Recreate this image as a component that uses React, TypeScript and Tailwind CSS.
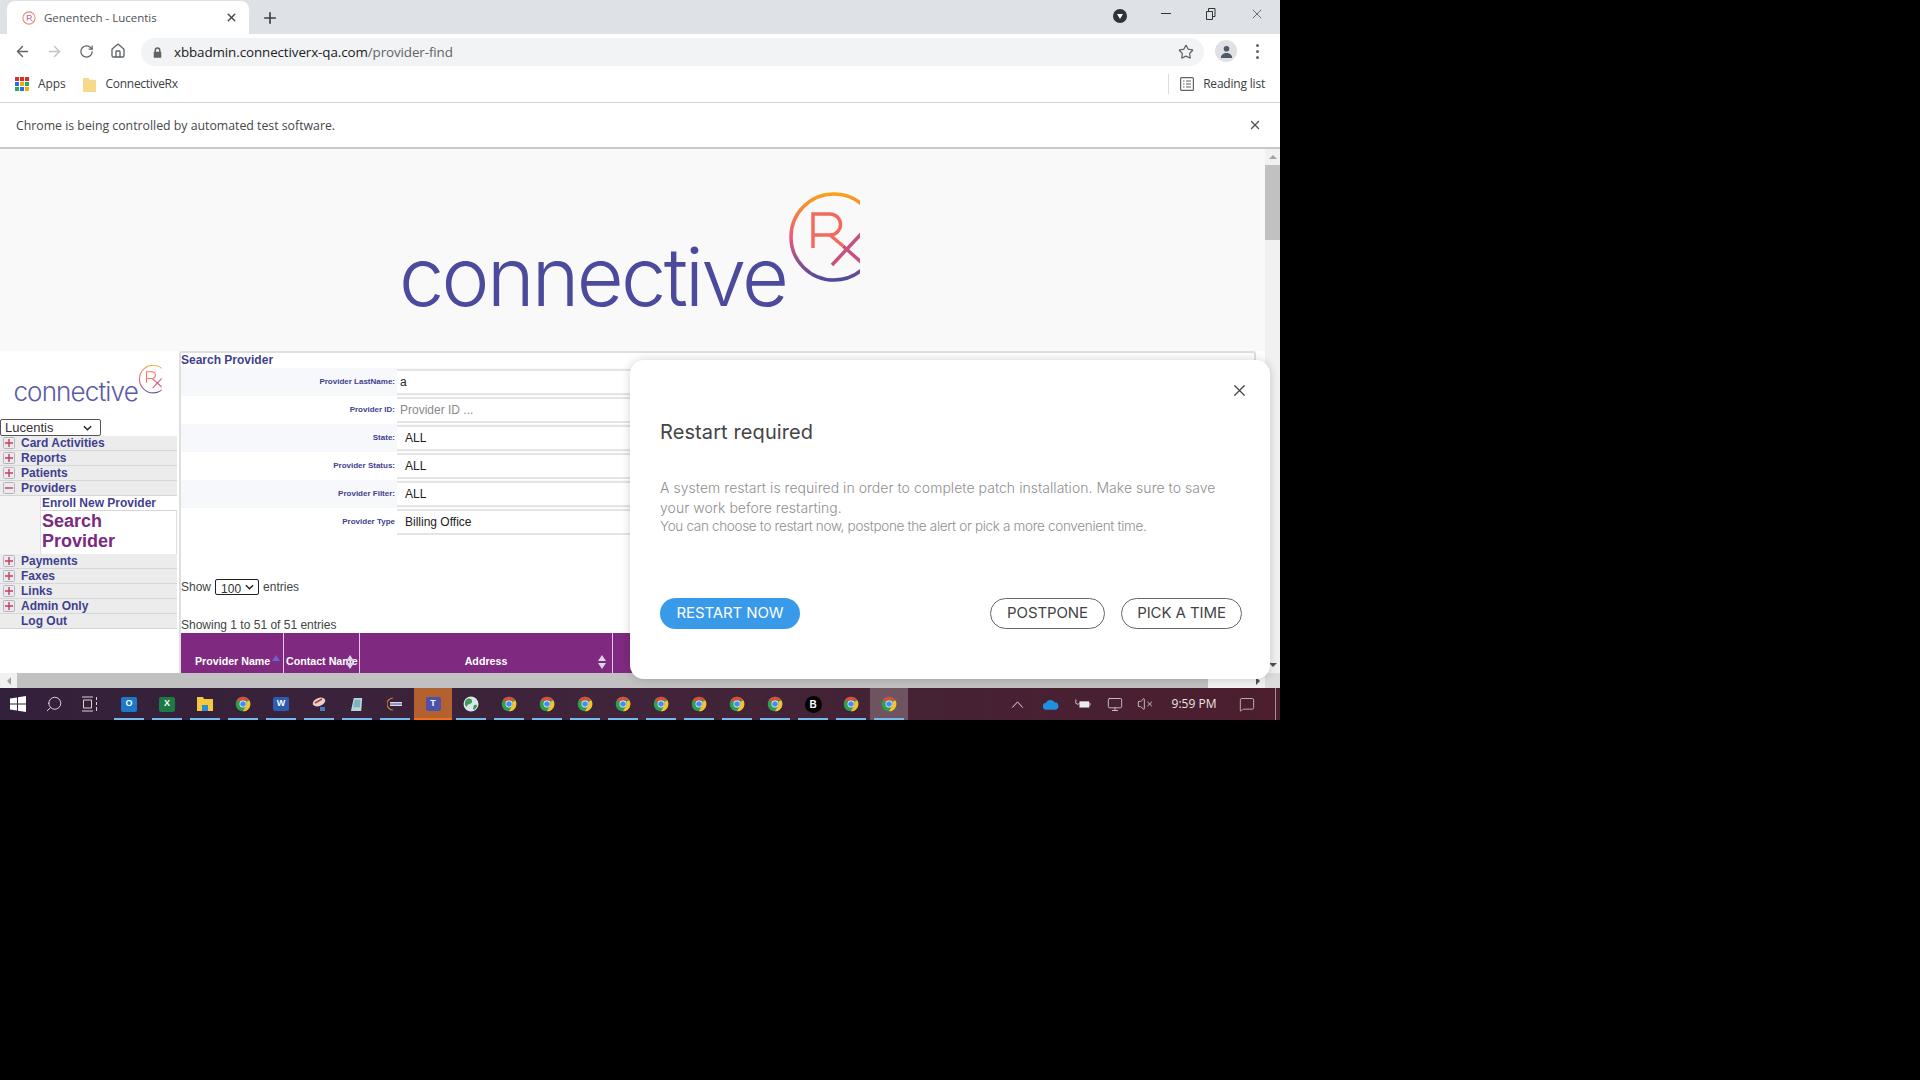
import React from "react";
import { ArrowLeft, ArrowRight, RotateCw, Home, Star, X, Plus, Search, VolumeX, Monitor, MessageSquare } from "lucide-react";

function Logo({ className, id }: { className: string; id: string }) {
  return (
    <svg viewBox="0 0 462 140" className={className}>
      <defs>
        <linearGradient id={id} x1="0" y1="0" x2="0" y2="1">
          <stop offset="0" stopColor="#f7a21b" />
          <stop offset="0.5" stopColor="#f0567a" />
          <stop offset="1" stopColor="#4e4a9e" />
        </linearGradient>
        <clipPath id={id + "c"}><rect x="0" y="0" width="460" height="120" /></clipPath>
      </defs>
      <text x="-1" y="116" fontSize="81" fontFamily="Inter, sans-serif" fontWeight="300" fill="#4b4a9c" textLength="390" lengthAdjust="spacing">connective</text>
      <g clipPath={`url(#${id}c)`} fill="none" strokeWidth="3.5">
        <circle cx="434" cy="47" r="43" stroke={`url(#${id})`} />
        <path d="M413 58V24h17a10 10 0 0 1 0 21h-17M430 45l13 11" stroke="#f26a5e" />
        <path d="M432 75l30-32M443 56l19 17" stroke="#c9507f" />
      </g>
    </svg>
  );
}

function Chromeicon() {
  return (
    <svg viewBox="0 0 24 24" className="w-[16px] h-[16px]">
      <circle cx="12" cy="12" r="11" fill="#2f9e50" />
      <path d="M12 1a11 11 0 0 1 9.53 5.5H12A5.5 5.5 0 0 0 7 9.8L3.3 5.2A11 11 0 0 1 12 1z" fill="#dd4b3e" />
      <path d="M21.53 6.5A11 11 0 0 1 12 23l4.8-8.2A5.5 5.5 0 0 0 16.7 9l4.83-2.5z" fill="#fbc02d" />
      <circle cx="12" cy="12" r="5.2" fill="#fff" />
      <circle cx="12" cy="12" r="4.2" fill="#4a8af0" />
    </svg>
  );
}

function Slot({ children, on = true, className = "" }: { children?: React.ReactNode; on?: boolean; className?: string }) {
  return (
    <div className={`relative w-[38px] h-full flex items-center justify-center ${className}`}>
      {children}
      {on && <div className="absolute bottom-0 left-[4px] right-[4px] h-[2px] bg-[#76b9ed]" />}
    </div>
  );
}

function TreeBox({ open }: { open?: boolean }) {
  return (
    <svg viewBox="0 0 12 12" className="w-[12px] h-[12px] shrink-0 ml-[3px] mr-[6px]">
      <rect x="0.5" y="0.5" width="11" height="11" rx="1" fill="#e9e9ee" stroke="#b5b5c2" />
      <path d={open ? "M2 6h8" : "M2 6h8M6 2v8"} stroke="#c3405a" strokeWidth="1.4" />
    </svg>
  );
}

function MenuRow({ label, open, none }: { label: string; open?: boolean; none?: boolean }) {
  return (
    <div className="h-[15px] flex items-center bg-[#ececec] border-b border-[#d6d6d6] text-[12px] font-bold text-[#3f3f8f] leading-none">
      {none ? <div className="w-[21px]" /> : <TreeBox open={open} />}
      <span>{label}</span>
    </div>
  );
}

function FormRow({ label, value, placeholder, striped, indent }: { label: string; value?: string; placeholder?: string; striped?: boolean; indent?: boolean }) {
  return (
    <div className={`h-[28px] flex items-center ${striped ? "bg-[#f7f8fb]" : ""}`}>
      <div className="w-[216px] pr-[2px] text-right text-[8px] font-bold text-[#3f3f8f]">{label}</div>
      <div className={`flex-1 h-[26px] flex items-center border-y-2 border-[#e4e4e4] bg-white text-[12px] ${indent ? "pl-[8px]" : "pl-[3px]"} ${placeholder ? "text-[#8a8a8a]" : "text-[#222]"}`}>
        {value ?? placeholder}
      </div>
    </div>
  );
}

function Sort({ up }: { up?: boolean }) {
  return (
    <svg viewBox="0 0 8 14" className="w-[8px] h-[14px]">
      <path d="M4 0l4 6H0z" fill={up ? "#6a62c8" : "#d9d5e6"} />
      {!up && <path d="M4 14l4-6H0z" fill="#d9d5e6" />}
    </svg>
  );
}

function Chevron({ className }: { className: string }) {
  return (
    <svg viewBox="0 0 10 6" className={className} fill="none" stroke="#222" strokeWidth="1.6">
      <path d="M1 1l4 4 4-4" />
    </svg>
  );
}

export default function App() {
  const chromes = [0, 1, 2, 3, 4, 5, 6, 7];
  return (
    <div className="w-[1920px] h-[1080px] bg-black overflow-hidden">
      <div className="relative w-[1280px] h-[720px] flex flex-col overflow-hidden font-['Liberation_Sans',Arial,sans-serif]">
        {/* tab strip */}
        <div className="h-[34px] shrink-0 bg-[#dee1e6] flex items-end pl-[7px] font-['Open_Sans',sans-serif]">
          <div className="w-[242px] h-[33px] bg-white rounded-t-[8px] flex items-center pl-[15px] pr-[11px] text-[11.5px] text-[#4b4f54]">
            <svg viewBox="0 0 16 16" className="w-[14px] h-[14px] mr-[8px]">
              <circle cx="8" cy="8" r="7" fill="none" stroke="#e58a7b" strokeWidth="1.2" />
              <path d="M6 11V5h3a1.6 1.6 0 0 1 0 3.500H6M9 8.500l3 3.500" fill="none" stroke="#b56aa0" strokeWidth="1.1" />
            </svg>
            <span className="flex-1">Genentech - Lucentis</span>
            <X size={13} strokeWidth={2.5} className="text-[#45474a]" />
          </div>
          <Plus size={18} strokeWidth={2.2} className="ml-[12px] mb-[7px] text-[#3c4043]" />
          <div className="flex-1 flex items-center h-full pb-[3px]">
            <div className="flex-1" />
            <div className="w-[14px] h-[14px] rounded-full bg-[#303338] flex items-center justify-center mr-[34px] mt-[1px]">
              <div className="w-0 h-0 border-x-[3px] border-x-transparent border-t-[5px] border-t-white" />
            </div>
            <div className="w-[10px] h-px bg-[#333] mr-[33px] mb-[4px]" />
            <svg viewBox="0 0 12 12" className="w-[12px] h-[12px] mr-[33px] mb-[4px]" fill="none" stroke="#333"><path d="M2.500 3.500h6v8h-6zM4.500 3.500V.5h6.500v8H8.500" /></svg>
            <X size={16} strokeWidth={1} className="text-[#333] mr-[15px] mb-[4px]" />
          </div>
        </div>
        {/* toolbar */}
        <div className="h-[34px] shrink-0 bg-white flex items-center font-['Open_Sans',sans-serif]">
          <ArrowLeft size={17} strokeWidth={2} className="ml-[14px] text-[#5f6368]" />
          <ArrowRight size={17} strokeWidth={2} className="ml-[15px] text-[#c0c2c5]" />
          <RotateCw size={15} strokeWidth={2} className="ml-[16px] text-[#5f6368]" />
          <Home size={16} strokeWidth={2} className="ml-[16px] text-[#5f6368]" />
          <div className="ml-[15px] w-[1063px] h-[28px] rounded-full bg-[#f1f3f4] flex items-center pl-[12px] pr-[10px] mt-[2px]">
            <svg viewBox="0 0 12 14" className="w-[9px] h-[11px] mr-[12px]"><path d="M2 6V4a4 4 0 0 1 8 0v2h1v8H1V6zM4 6h4V4a2 2 0 0 0-4 0z" fill="#5f6368" fillRule="evenodd" /></svg>
            <span className="text-[13.4px] text-[#202124] tracking-[-0.1px]">xbbadmin.connectiverx-qa.com<span className="text-[#5f6368]">/provider-find</span></span>
            <div className="flex-1" />
            <Star size={16} strokeWidth={1.8} className="text-[#5f6368]" />
          </div>
          <div className="ml-[11px] w-[22px] h-[22px] rounded-full bg-[#dfe1e5] flex items-center justify-center overflow-hidden">
            <svg viewBox="0 0 16 16" className="w-[15px] h-[15px]"><circle cx="8" cy="5" r="3" fill="#4d5a68" /><path d="M2 15c0-4 3-5.500 6-5.500s6 1.500 6 5.500z" fill="#4d5a68" /></svg>
          </div>
          <div className="ml-[19px] flex flex-col gap-[3px]">
            <div className="w-[3px] h-[3px] rounded-full bg-[#5f6368]" />
            <div className="w-[3px] h-[3px] rounded-full bg-[#5f6368]" />
            <div className="w-[3px] h-[3px] rounded-full bg-[#5f6368]" />
          </div>
        </div>
        {/* bookmarks */}
        <div className="h-[35px] shrink-0 bg-white border-b border-[#d3d4d6] flex items-center pb-[2px] text-[12px] text-[#3c4043] font-['Open_Sans',sans-serif]">
          <div className="ml-[15px] grid grid-cols-3 gap-[1px] w-[14px] h-[14px]">
            {["#d93025","#d93025","#d93025","#1a73e8","#f9ab00","#34a853","#34a853","#1a73e8","#f9ab00"].map((c, i) => (
              <div key={i} className="w-[4px] h-[4px]" style={{ background: c }} />
            ))}
          </div>
          <span className="ml-[9px] tracking-[-0.1px]">Apps</span>
          <svg viewBox="0 0 14 16" className="ml-[17px] w-[13px] h-[15px]"><path d="M0 1h6l1 2h7v13H0z" fill="#f6d98a" /></svg>
          <span className="ml-[10px] tracking-[-0.3px]">ConnectiveRx</span>
          <div className="flex-1" />
          <div className="w-px h-[20px] bg-[#dadce0]" />
          <svg viewBox="0 0 14 14" className="ml-[11px] w-[14px] h-[14px]" fill="none" stroke="#5f6368" strokeWidth="1.200"><rect x="0.6" y="0.6" width="12.800" height="12.800" rx="1" /><path d="M3 4h1.500M6 4h5M3 7h1.500M6 7h5M3 10h1.500M6 10h5" /></svg>
          <span className="ml-[9px] mr-[15px] tracking-[-0.2px]">Reading list</span>
        </div>
        {/* info bar */}
        <div className="h-[46px] shrink-0 bg-white border-b-2 border-[#c8c8c8] flex items-center pl-[16px] pr-[18px] text-[12.3px] text-[#45484c] font-['Open_Sans',sans-serif]">
          <span className="mt-[2px]">Chrome is being controlled by automated test software.</span>
          <div className="flex-1" />
          <X size={14} strokeWidth={2.4} className="text-[#50535a]" />
        </div>
        {/* page */}
        <div className="flex-1 min-h-0 flex flex-col">
          <div className="flex-1 min-h-0 flex">
            <div className="flex-1 min-w-0 flex flex-col overflow-hidden bg-white">
              <div className="h-[202px] shrink-0 bg-[#f9f9fa] pt-[41px] pl-[400px]">
                <Logo id="big" className="w-[462px] h-[140px]" />
              </div>
              <div className="flex-1 min-h-0 flex overflow-hidden">
                <div className="w-[179px] shrink-0 pt-[13px]">
                  <Logo id="small" className="ml-[13px] w-[150px] h-[45px] opacity-90" />
                  <div className="relative mt-[10px] w-[101px] h-[17px]">
                    <select defaultValue="Lucentis" className="appearance-none block w-full h-full border border-[#555] rounded-[2px] bg-white text-[13px] text-[#333] leading-none pl-[4px]">
                      <option>Lucentis</option>
                    </select>
                    <Chevron className="absolute right-[9px] top-[6px] w-[9px] h-[6px]" />
                  </div>
                  <div className="w-[177px]">
                    <MenuRow label="Card Activities" />
                    <MenuRow label="Reports" />
                    <MenuRow label="Patients" />
                    <MenuRow label="Providers" open />
                    <div className="flex bg-[#f4f4f4]">
                      <div className="w-[40px]" />
                      <div className="flex-1 border-l border-[#ddd]">
                        <div className="h-[15px] flex items-center bg-white border-b border-[#d6d6d6] text-[12px] font-bold text-[#3f3f8f] leading-none pl-px">Enroll New Provider</div>
                        <div className="h-[43px] bg-white text-[18px] font-bold text-[#7a2a80] leading-[20px] pl-px border-r border-[#ddd]">Search<br />Provider</div>
                      </div>
                    </div>
                    <MenuRow label="Payments" />
                    <MenuRow label="Faxes" />
                    <MenuRow label="Links" />
                    <MenuRow label="Admin Only" />
                    <MenuRow label="Log Out" none />
                  </div>
                </div>
                <div className="flex-1 min-w-0 mr-[9px] border-t-2 border-l-2 border-r-2 border-[#dfdfdf] rounded-t-[3px] overflow-hidden">
                  <div className="h-[15px] text-[12px] font-bold text-[#3f3f8f] leading-[15px]">Search Provider</div>
                  <div>
                    <FormRow label="Provider LastName:" value="a" striped />
                    <FormRow label="Provider ID:" placeholder="Provider ID ..." />
                    <FormRow label="State:" value="ALL" striped indent />
                    <FormRow label="Provider Status:" value="ALL" indent />
                    <FormRow label="Provider Filter:" value="ALL" striped indent />
                    <FormRow label="Provider Type" value="Billing Office" indent />
                  </div>
                  <div className="mt-[43px] flex items-center h-[16px] text-[12px] text-[#444]">
                    Show
                    <div className="relative mx-[4px] w-[44px] h-[16px]">
                      <select defaultValue="100" className="appearance-none block w-full h-full border border-[#222] rounded-[2px] bg-white text-[12px] text-[#333] pl-[5px]">
                        <option>100</option>
                      </select>
                      <Chevron className="absolute right-[5px] top-[5px] w-[9px] h-[6px]" />
                    </div>
                    entries
                  </div>
                  <div className="mt-[22px] h-[16px] text-[12px] leading-[16px] text-[#444]">Showing 1 to 51 of 51 entries</div>
                  <div className="h-[42px] flex text-white font-bold text-[10.67px] border-b border-[#e7c6e9]">
                    <div className="w-[103px] bg-[#7f2a80] border-r border-[#e7c6e9] flex items-end pb-[5px] pl-[14px] gap-[2px]">
                      <span>Provider Name</span>
                      <span className="mb-[8px] h-[6px] overflow-hidden"><Sort up /></span>
                    </div>
                    <div className="w-[76px] relative bg-[#7f2a80] border-r border-[#e7c6e9] flex items-end pb-[5px] pl-[2px]">
                      <span>Contact Name</span>
                      <span className="absolute left-[62px] bottom-[5px]"><Sort /></span>
                    </div>
                    <div className="w-[253px] relative bg-[#7f2a80] border-r border-[#e7c6e9] flex items-end justify-center pb-[5px]">
                      <span>Address</span>
                      <span className="absolute right-[6px] bottom-[5px]"><Sort /></span>
                    </div>
                    <div className="flex-1 bg-[#7f2a80]" />
                  </div>
                </div>
              </div>
            </div>
            {/* vertical scrollbar */}
            <div className="w-[15px] shrink-0 bg-[#f1f1f1] flex flex-col items-center">
              <div className="h-[16px] flex items-center"><div className="w-0 h-0 border-x-[4px] border-x-transparent border-b-[4px] border-b-[#a3a3a3]" /></div>
              <div className="w-full h-[75px] bg-[#c1c1c1]" />
              <div className="flex-1" />
              <div className="h-[16px] flex items-center"><div className="w-0 h-0 border-x-[4px] border-x-transparent border-t-[4px] border-t-[#505050]" /></div>
            </div>
          </div>
          {/* horizontal scrollbar */}
          <div className="h-[15px] shrink-0 flex bg-[#f1f1f1]">
            <div className="w-[17px] flex items-center justify-center"><div className="w-0 h-0 border-y-[4px] border-y-transparent border-r-[4px] border-r-[#a3a3a3]" /></div>
            <div className="w-[1191px] bg-[#c1c1c1]" />
            <div className="flex-1" />
            <div className="w-[15px] flex items-center justify-center"><div className="w-0 h-0 border-y-[4px] border-y-transparent border-l-[4px] border-l-[#505050]" /></div>
            <div className="w-[15px] bg-[#dcdcdc]" />
          </div>
        </div>
        {/* taskbar */}
        <div className="h-[32px] shrink-0 flex items-stretch bg-gradient-to-r from-[#33203a] via-[#40243a] to-[#4c1e2e] text-white">
          <div className="w-[36px] flex items-center justify-center">
            <svg viewBox="0 0 16 16" className="w-[16px] h-[16px]" fill="#fff"><path d="M0 2.500l7-1v6H0zM8 1.300L16 0v7.500H8zM0 8.500h7v6l-7-1zM8 8.500h8V16l-8-1.300z" /></svg>
          </div>
          <div className="w-[36px] flex items-center justify-center"><Search size={18} strokeWidth={1.200} className="-scale-x-100 text-[#e6e2e6]" /></div>
          <div className="w-[36px] mr-[2px] flex items-center justify-center">
            <svg viewBox="0 0 18 16" className="w-[18px] h-[16px]" fill="none" stroke="#d8d4d8"><path d="M1 1h11M1 15h11M2.500 4h8v8h-8zM15.500 1v3M15.500 6v3M15.500 11v4" /></svg>
          </div>
          <Slot><div className="w-[16px] h-[15px] rounded-[2px] bg-[#1b79c9] text-[9px] font-bold flex items-center justify-center">O</div></Slot>
          <Slot><div className="w-[16px] h-[15px] rounded-[2px] bg-[#1b7a45] text-[9px] font-bold flex items-center justify-center">X</div></Slot>
          <Slot>
            <svg viewBox="0 0 16 14" className="w-[16px] h-[14px]"><path d="M0 0h6l1 2h9v12H0z" fill="#f5c83e" /><path d="M5 8h6v6H5z" fill="#2c8fd6" /></svg>
          </Slot>
          <Slot><Chromeicon /></Slot>
          <Slot><div className="w-[16px] h-[14px] rounded-[2px] bg-[#2a5cb0] text-[9px] font-bold flex items-center justify-center">W</div></Slot>
          <Slot>
            <svg viewBox="0 0 16 16" className="w-[16px] h-[16px]"><ellipse cx="8" cy="6" rx="6.500" ry="4" fill="#e8d0d0" transform="rotate(-20 8 6)" /><path d="M4 7l7-4" stroke="#c0392b" strokeWidth="1.500" /><path d="M9 11h5v4H9z" fill="#3a7fb5" /></svg>
          </Slot>
          <Slot>
            <svg viewBox="0 0 16 16" className="w-[15px] h-[15px]"><path d="M4 1h9l-1 14H1z" fill="#b6d5dc" /><path d="M5 3h6l-.5 8H3.500z" fill="#7fb2bf" /></svg>
          </Slot>
          <Slot>
            <svg viewBox="0 0 16 16" className="w-[16px] h-[16px]"><path d="M6 2a6 6 0 0 0 0 12" fill="none" stroke="#c8762e" strokeWidth="1.200" /><path d="M3 6h12v4H3z" fill="#d8dbe8" /><path d="M3 8h12" stroke="#4a4a8a" /></svg>
          </Slot>
          <Slot on={false} className="bg-[#b3622f]">
            <div className="w-[15px] h-[14px] rounded-[2px] bg-[#4c52a8] text-[9px] font-bold flex items-center justify-center">T</div>
            <div className="absolute bottom-0 left-0 right-0 h-[2px] bg-[#f07020]" />
          </Slot>
          <Slot>
            <svg viewBox="0 0 16 16" className="w-[16px] h-[16px]"><circle cx="8" cy="8" r="7.500" fill="#d6e8ec" /><path d="M3 4c3-3 7-1 6 2s-5 1-5 5c-2-1-3-4-1-7zM11 9c3-1 4 0 2 3s-4 2-2-3z" fill="#3f9a54" /></svg>
          </Slot>
          {chromes.map((c) => <Slot key={c}><Chromeicon /></Slot>)}
          <Slot><div className="w-[17px] h-[17px] rounded-full bg-black text-[10px] font-bold flex items-center justify-center">B</div></Slot>
          <Slot><Chromeicon /></Slot>
          <Slot className="bg-[#6d5460]"><Chromeicon /></Slot>
          <div className="flex-1" />
          <div className="w-[16px] flex items-center justify-center mr-[18px]">
            <svg viewBox="0 0 14 8" className="w-[13px] h-[7px]" fill="none" stroke="#e4e0e2" strokeWidth="1.100"><path d="M1 7.500l6-6.500 6 6.500" /></svg>
          </div>
          <div className="w-[16px] flex items-center justify-center mr-[16px]">
            <svg viewBox="0 0 18 12" className="w-[17px] h-[11px]"><path d="M4 12a4 4 0 0 1-.5-8A5.500 5.500 0 0 1 13 3.500 4.300 4.300 0 0 1 14 12z" fill="#1f8fe0" /></svg>
          </div>
          <div className="w-[16px] flex items-center justify-center mr-[16px]">
            <svg viewBox="0 0 18 12" className="w-[17px] h-[12px]"><path d="M5 3h11v7H5z" fill="#ececec" /><path d="M16 5h1.500v3H16" fill="#aaa" /><path d="M1 1v2a2 2 0 0 0 4 2" fill="none" stroke="#e8e8e8" /></svg>
          </div>
          <div className="w-[16px] flex items-center justify-center mr-[14px]"><Monitor size={17} strokeWidth={1.200} className="text-[#e0e0e0]" /></div>
          <div className="w-[16px] flex items-center justify-center mr-[19px]"><VolumeX size={16} strokeWidth={1.200} className="text-[#e0e0e0]" /></div>
          <div className="w-[44px] flex items-center justify-center text-[12px] text-[#e8e4e6] font-['Open_Sans',sans-serif] whitespace-nowrap mr-[23px]">9:59 PM</div>
          <div className="w-[16px] flex items-center justify-center mr-[20px]"><MessageSquare size={19} strokeWidth={1.100} className="text-[#e0e0e0]" /></div>
          <div className="w-px bg-[#a09098] mr-[4px]" />
        </div>
        {/* dialog */}
        <div className="absolute left-[630px] top-[360px] w-[640px] h-[319px] rounded-[14px] bg-white shadow-[0_0_10px_rgba(0,0,0,0.18)] font-['Inter',sans-serif] pl-[30px] pr-[28px]">
          <X size={19} strokeWidth={1.500} className="absolute right-[21px] top-[21px] text-[#444]" />
          <div className="pt-[60px] text-[20px] leading-[24px] text-[#444] tracking-[0.1px]">Restart required</div>
          <div className="mt-[34px] text-[14px] font-light text-[#8f8f8f]">
            <div className="leading-[20px] tracking-[0.04px]">A system restart is required in order to complete patch installation. Make sure to save</div>
            <div className="leading-[19px] tracking-[0.04px]">your work before restarting.</div>
            <div className="leading-[18px] text-[13.500px] tracking-[-0.32px]">You can choose to restart now, postpone the alert or pick a more convenient time.</div>
          </div>
          <div className="mt-[63px] flex items-center">
            <div className="w-[140px] h-[31px] rounded-full bg-[#3a9aea] text-white text-[15px] flex items-center justify-center tracking-[-0.1px]">RESTART NOW</div>
            <div className="flex-1" />
            <div className="w-[115px] h-[31px] rounded-full border border-[#666] text-[#444] text-[15px] flex items-center justify-center tracking-[-0.1px]">POSTPONE</div>
            <div className="ml-[16px] w-[121px] h-[31px] rounded-full border border-[#666] text-[#444] text-[15px] flex items-center justify-center tracking-[-0.1px]">PICK A TIME</div>
          </div>
        </div>
      </div>
    </div>
  );
}
